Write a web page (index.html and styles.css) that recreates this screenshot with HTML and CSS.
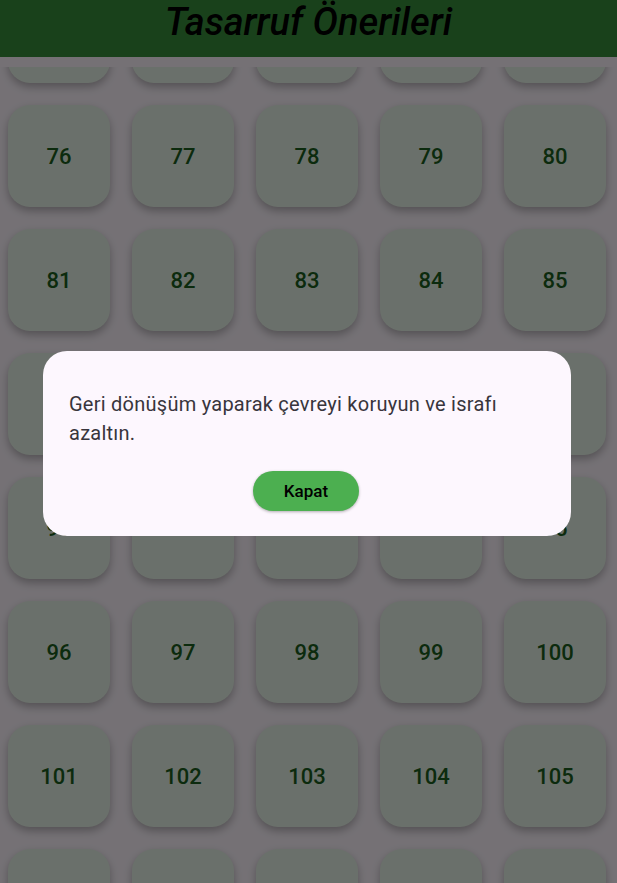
FILE: index.html
```html
<!DOCTYPE html>
<html lang="tr">
<head>
<meta charset="utf-8">
<title>Tasarruf Önerileri</title>
<link rel="stylesheet" href="styles.css">
</head>
<body>
<div class="app">
  <header class="appbar"><h1 class="title">Tasarruf Önerileri</h1></header>
  <main class="viewport">
    <div class="grid">
      <div class="tile">71</div><div class="tile">72</div><div class="tile">73</div><div class="tile">74</div><div class="tile">75</div>
      <div class="tile">76</div><div class="tile">77</div><div class="tile">78</div><div class="tile">79</div><div class="tile">80</div>
      <div class="tile">81</div><div class="tile">82</div><div class="tile">83</div><div class="tile">84</div><div class="tile">85</div>
      <div class="tile">86</div><div class="tile">87</div><div class="tile">88</div><div class="tile">89</div><div class="tile">90</div>
      <div class="tile">91</div><div class="tile">92</div><div class="tile">93</div><div class="tile">94</div><div class="tile">95</div>
      <div class="tile">96</div><div class="tile">97</div><div class="tile">98</div><div class="tile">99</div><div class="tile">100</div>
      <div class="tile">101</div><div class="tile">102</div><div class="tile">103</div><div class="tile">104</div><div class="tile">105</div>
      <div class="tile">106</div><div class="tile">107</div><div class="tile">108</div><div class="tile">109</div><div class="tile">110</div>
    </div>
  </main>
</div>
<div class="barrier">
  <div class="dialog" role="dialog">
    <p class="dialog-text">Geri dönüşüm yaparak çevreyi koruyun ve israfı azaltın.</p>
    <div class="dialog-actions"><button class="btn">Kapat</button></div>
  </div>
</div>
</body>
</html>
```
FILE: styles.css
```css
html, body {
  margin: 0;
  padding: 0;
  height: 883px;
  overflow: hidden;
  background: #fef7ff;
  font-family: Roboto, "Noto Sans", sans-serif;
}
.app {
  display: flex;
  flex-direction: column;
  height: 883px;
}
.appbar {
  height: 57px;
  flex: none;
  background: #388e3c;
  display: flex;
  justify-content: center;
  align-items: flex-start;
}
.title {
  margin: 0;
  padding-top: 0;
  font-size: 38px;
  line-height: 44px;
  font-style: italic;
  font-weight: 500;
  color: #000;
}
.viewport {
  flex: 1;
  margin-top: 10px;
  overflow: hidden;
}
.grid {
  margin-top: -86px;
  padding-left: 8px;
  display: grid;
  grid-template-columns: repeat(5, 102px);
  grid-auto-rows: 102px;
  gap: 22px;
}
.tile {
  background: #e8f5e9;
  border-radius: 22px;
  box-shadow: 0 4px 8px rgba(0,0,0,0.28);
  display: flex;
  align-items: center;
  justify-content: center;
  font-size: 22px;
  font-weight: 500;
  color: #1b5e20;
}
.barrier {
  position: fixed;
  inset: 0;
  background: rgba(0,0,0,0.54);
}
.dialog {
  position: absolute;
  left: 43px;
  top: 351px;
  width: 528px;
  height: 185px;
  box-sizing: border-box;
  background: #fdf7fe;
  border-radius: 24px;
  padding: 39px 26px 25px 26px;
  display: flex;
  flex-direction: column;
}
.dialog-text {
  margin: 0;
  font-size: 20px;
  line-height: 29px;
  letter-spacing: 0.25px;
  color: #38353c;
}
.dialog-actions {
  margin-top: auto;
  display: flex;
  justify-content: center;
}
.btn {
  width: 106px;
  height: 40px;
  border: none;
  border-radius: 20px;
  background: #4caf50;
  color: #000;
  font-family: Roboto, sans-serif;
  font-size: 17px;
  font-weight: 500;
  box-shadow: 0 1px 3px rgba(0,0,0,0.3);
  margin-left: -2px;
}
```
